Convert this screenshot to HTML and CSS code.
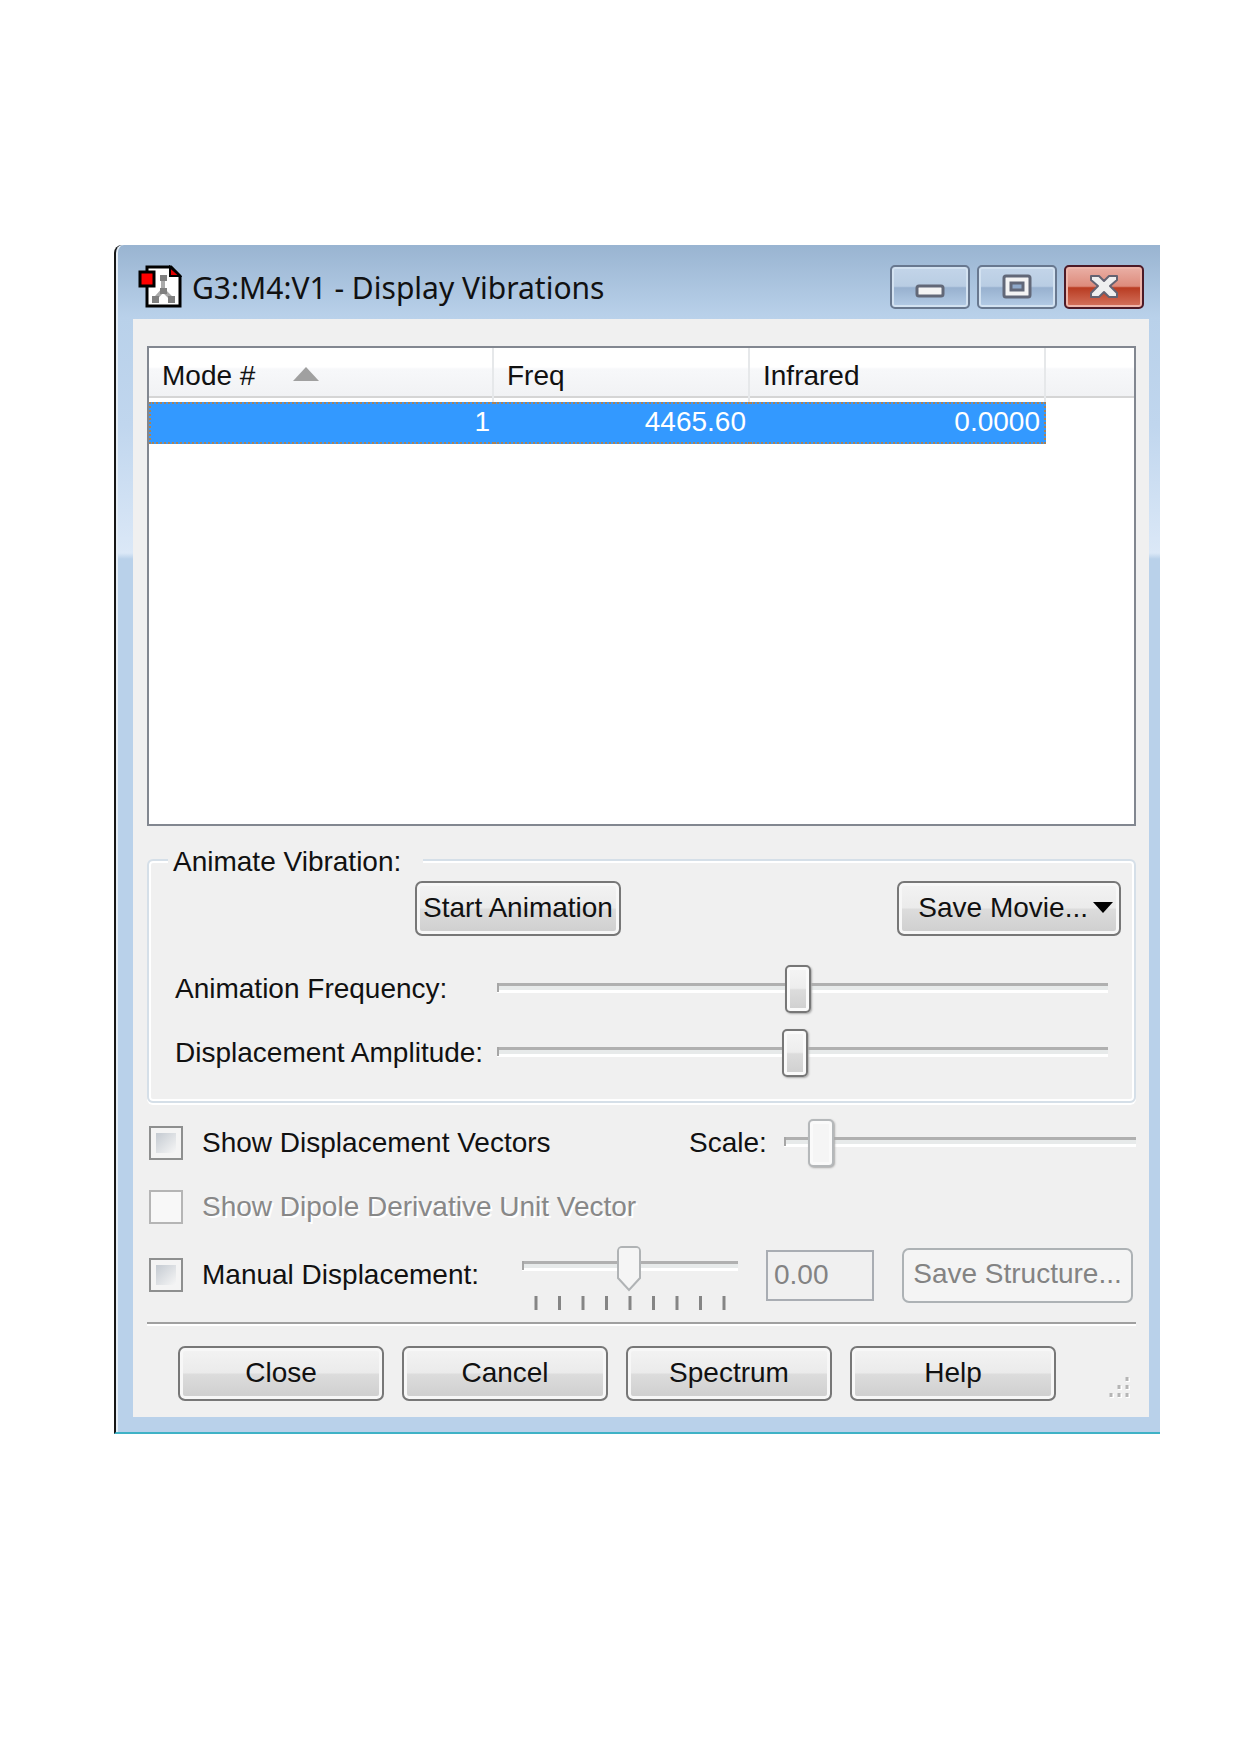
FILE: index.html
```html
<!DOCTYPE html>
<html lang="en">
<head>
<meta charset="utf-8">
<title>Display Vibrations</title>
<link rel="stylesheet" href="styles.css">
</head>
<body>
<main class="window">
  <header class="titlebar">
    <svg class="app-icon" width="44" height="44" viewBox="0 0 44 44" aria-hidden="true">
      <path d="M9 2h24l9 9v30H9z" fill="#fff" stroke="#000" stroke-width="3"/>
      <path d="M32 2v9h10z" fill="#e00000" stroke="#000" stroke-width="2"/>
      <path d="M25 14v14M25 25L17 34M25 25l9 9" stroke="#aaa" stroke-width="4" fill="none"/>
      <path d="M22 10h7v6h-7zM22 23h7v6h-7zM14 31h7v7h-7zM30 31h7v7h-7z" fill="#808080"/>
      <path d="M2 7h14v14H2z" fill="#f00" stroke="#000" stroke-width="3"/>
    </svg>
    <h1 class="title">G3:M4:V1 - Display Vibrations</h1>
    <div class="caption-buttons">
      <button class="caption" type="button" aria-label="Minimize">
        <svg width="30" height="26" viewBox="0 0 30 26"><rect x="2" y="12" width="26" height="10" rx="2" fill="#f4f4f4" stroke="#626878" stroke-width="3"/></svg>
      </button>
      <button class="caption" type="button" aria-label="Maximize">
        <svg width="30" height="26" viewBox="0 0 30 26"><rect x="2" y="2" width="26" height="21" rx="2" fill="#f4f4f4" stroke="#626878" stroke-width="3"/><rect x="9" y="9" width="12" height="7" fill="#8fa9ca" stroke="#626878" stroke-width="3"/></svg>
      </button>
      <button class="caption caption-close" type="button" aria-label="Close window">
        <svg width="30" height="26" viewBox="0 0 30 26"><path d="M2 2h8l5 5 5-5h8v4l-7 6 7 7v4h-8l-5-5-5 5H2v-4l7-7-7-6z" fill="#efefef" stroke="#646372" stroke-width="2" stroke-linejoin="round"/></svg>
      </button>
    </div>
  </header>
  <form class="client">
    <div class="list">
      <table class="modes">
        <colgroup><col class="col-mode"><col class="col-freq"><col class="col-ir"><col></colgroup>
        <thead>
          <tr>
            <th>Mode # <svg class="sort" width="26" height="14" viewBox="0 0 26 14" aria-hidden="true"><path d="M13 0l13 14H0z" fill="#a0a0a0"/></svg></th>
            <th>Freq</th><th>Infrared</th><th></th>
          </tr>
        </thead>
        <tbody>
          <tr><td>1</td><td>4465.60</td><td>0.0000</td></tr>
        </tbody>
      </table>
    </div>

    <fieldset class="group">
      <legend>Animate Vibration:</legend>
      <div class="group-actions">
        <button class="btn" type="button">Start Animation</button>
        <button class="btn btn-menu" type="button">Save Movie...<svg width="20" height="11" viewBox="0 0 20 11" aria-hidden="true"><path d="M0 0h20L10 11z"/></svg></button>
      </div>
      <div class="slider-row">
        <label for="frequency">Animation Frequency:</label>
        <input class="slider" id="frequency" type="range" min="0" max="1000" value="492">
      </div>
      <div class="slider-row">
        <label for="amplitude">Displacement Amplitude:</label>
        <input class="slider" id="amplitude" type="range" min="0" max="1000" value="487">
      </div>
    </fieldset>

    <div class="option">
      <input class="check" id="vectors" type="checkbox">
      <label for="vectors">Show Displacement Vectors</label>
      <div class="scale">
        <label for="scale">Scale:</label>
        <input class="slider" id="scale" type="range" min="0" max="1000" value="74" disabled>
      </div>
    </div>
    <div class="option">
      <input class="check" id="dipole" type="checkbox" disabled>
      <label class="dim" for="dipole">Show Dipole Derivative Unit Vector</label>
    </div>
    <div class="option option-manual">
      <input class="check" id="manual" type="checkbox">
      <label for="manual">Manual Displacement:</label>
      <div class="manual">
        <div class="ticked">
          <input class="slider pointed" type="range" min="0" max="1000" value="495" aria-label="Manual displacement" disabled>
          <svg width="192" height="14" viewBox="0 0 192 14" aria-hidden="true"><path d="M2 0v14M25.500 0v14M49 0v14M72.500 0v14M96 0v14M119.500 0v14M143 0v14M166.500 0v14M190 0v14" stroke="#858585" stroke-width="3"/></svg>
        </div>
        <input class="value" type="text" value="0.00" aria-label="Displacement value" disabled>
        <button class="btn btn-structure" type="button" disabled>Save Structure...</button>
      </div>
    </div>

    <hr class="rule">
    <footer class="footer">
      <button class="btn" type="button">Close</button>
      <button class="btn" type="button">Cancel</button>
      <button class="btn" type="button">Spectrum</button>
      <button class="btn" type="button">Help</button>
      <svg class="grip" width="22" height="24" viewBox="0 0 22 24" aria-hidden="true">
        <path d="M20 5v-4M12 13v-4M20 13v-4M4 21v-4M12 21v-4M20 21v-4" stroke="#fff" stroke-width="4"/>
        <path d="M19 4v-4M11 12v-4M19 12v-4M3 20v-4M11 20v-4M19 20v-4" stroke="#b5b5b5" stroke-width="3"/>
      </svg>
    </footer>
  </form>
</main>
</body>
</html>
```
FILE: styles.css
```css
* { box-sizing: border-box; }

body {
  margin: 0;
  padding: 245px 80px 320px 114px;
  background: #fff;
  color: #111;
  font: 28px/32px "Liberation Sans", Arial, sans-serif;
}

button, input { font: inherit; color: inherit; margin: 0; }

.window {
  padding: 0 11px 15px 17px;
  border-left: 2px solid #161616;
  border-bottom: 2px solid #3fb2c6;
  border-top-left-radius: 8px;
  background: linear-gradient(#99b4d1, #b9d1ea 72px, #c0d6ee 180px, #dbe8f7 308px, #b9d1ea 314px);
  box-shadow: inset 2px 0 #e4edf6;
}

.titlebar {
  display: flex;
  align-items: center;
  height: 74px;
  padding: 14px 5px 0;
}

.titlebar .app-icon { margin-bottom: 4px; }

.title {
  flex: 1;
  margin: 0 0 2px 10px;
  font: 30px/36px "Noto Sans", sans-serif;
  white-space: nowrap;
}

.caption-buttons { display: flex; gap: 7px; margin-bottom: 4px; }

.caption {
  display: flex;
  align-items: center;
  justify-content: center;
  width: 80px;
  height: 44px;
  padding: 0;
  border: 2px solid #68788f;
  border-radius: 5px;
  background: linear-gradient(#c3d5e9, #b9cde3 48%, #98b1cf 52%, #b4cce6);
  box-shadow: inset 0 0 0 2px #d3e2f1;
}

.caption-close {
  border-color: #4c1a27;
  background: linear-gradient(#eab0a6, #dd8b7c 48%, #b93c22 52%, #d4745f);
  box-shadow: inset 0 0 0 2px #eeb5aa;
}

.client {
  padding: 27px 13px 16px 14px;
  background: #f0f0f0;
}

.list {
  min-height: 480px;
  border: 2px solid #828790;
  background: #fff;
}

.modes {
  width: 100%;
  table-layout: fixed;
  border-collapse: separate;
  border-spacing: 0;
}

.col-mode { width: 345px; }
.col-freq { width: 256px; }
.col-ir { width: 296px; }

.modes th {
  height: 54px;
  padding: 1px 13px 0;
  border-right: 2px solid #e6e8ea;
  background: linear-gradient(#fff 19px, #f7f8fa 21px, #f1f2f4 48px, #d5d5d5 48px, #d5d5d5 50px, #fff 50px);
  font-weight: normal;
  text-align: left;
}

.modes th:last-child { border-right: 0; }
.sort { margin-left: 30px; vertical-align: 4px; }

.modes td {
  height: 42px;
  padding: 0 4px 2px;
  border: dotted #a98258;
  border-width: 2px 0;
  background: #39f;
  color: #fff;
  text-align: right;
}

.modes td:first-child { border-left-width: 2px; }
.modes td:last-child { border-right-width: 2px; }

.group {
  min-width: 0;
  margin: 16px 0 8px;
  padding: 3px 13px 16px 26px;
  border: 2px solid #d5dfe8;
  border-radius: 6px;
  box-shadow: inset 0 0 0 2px #fff, 0 2px #fff;
}

.group legend {
  margin-left: -7px;
  padding: 4px 22px 0 5px;
  background: #f0f0f0;
}

.group-actions {
  display: flex;
  justify-content: space-between;
  margin-bottom: 21px;
  padding-left: 240px;
}

.btn {
  width: 206px;
  height: 55px;
  padding: 0 0 2px;
  border: 2px solid #777;
  border-radius: 7px;
  background: linear-gradient(#f3f3f3, #ebebeb 48%, #dcdcdc 52%, #cecece);
  box-shadow: inset 0 0 0 3px #f7f7f7;
  white-space: nowrap;
}

.btn-menu {
  display: flex;
  align-items: center;
  justify-content: flex-end;
  gap: 5px;
  width: 224px;
  padding-right: 6px;
}

.btn:disabled {
  border-color: #adb2b5;
  background: #f4f4f4;
  box-shadow: none;
  color: #838383;
}

.slider-row {
  display: grid;
  grid-template-columns: 322px 1fr;
  align-items: center;
  height: 64px;
  padding-right: 13px;
}

.slider {
  appearance: none;
  width: 100%;
  height: 48px;
  background:
    linear-gradient(#a6a6a6, #a6a6a6) 0 18px / 2px 9px no-repeat,
    linear-gradient(#b0b0b0 3px, #e7eaea 3px, #e7eaea 7px, #fff 7px) 0 18px / 100% 10px no-repeat;
}

.slider::-webkit-slider-thumb {
  appearance: none;
  width: 26px;
  height: 48px;
  border: 2px solid #777;
  border-radius: 5px;
  background: linear-gradient(#f5f5f5, #ededed 48%, #dcdcdc 52%, #cfcfcf);
  box-shadow: inset 0 0 0 3px #fafafa, 1px 1px 2px #aaa;
}

.slider:disabled::-webkit-slider-thumb {
  border-color: #b5b8ba;
  background: #f5f5f5;
}

.option {
  display: grid;
  grid-template-columns: 34px auto 1fr;
  align-items: center;
  height: 64px;
  padding-left: 2px;
}

.option > label { padding-left: 19px; white-space: nowrap; }
.option-manual { height: 72px; }

.check {
  appearance: none;
  width: 34px;
  height: 34px;
  border: 2px solid #8e8f8f;
  background: linear-gradient(135deg, #c4cad1, #f6f6f6) content-box, #f4f4f4;
  padding: 5px;
}

.check:disabled { border-color: #b5b5b5; background: #f8f8f8; }
.dim { color: #888; text-shadow: 2px 2px #fff; }

.scale {
  display: grid;
  grid-template-columns: 95px 352px;
  align-items: center;
  justify-content: end;
}

.manual {
  display: grid;
  grid-template-columns: 216px 108px 231px;
  align-items: center;
  justify-content: end;
  column-gap: 28px;
  padding-right: 3px;
}

.ticked {
  display: flex;
  flex-direction: column;
  align-items: center;
  gap: 4px;
  padding-top: 6px;
}

.pointed {
  height: 46px;
  background-position: 0 15px, 0 15px;
}

.pointed:disabled::-webkit-slider-thumb {
  width: 24px;
  height: 46px;
  border: 0;
  background: url("data:image/svg+xml,%3Csvg xmlns='http://www.w3.org/2000/svg' width='24' height='46'%3E%3Cpath d='M4 1h16q3 0 3 3v28L12 44 1 32V4q0-3 3-3z' fill='%23f5f5f5' stroke='%23b0b3b5' stroke-width='2'/%3E%3C/svg%3E") no-repeat;
  box-shadow: none;
}

.value {
  width: 100%;
  height: 51px;
  padding: 0 6px;
  border: 2px solid #a9adb3;
  border-radius: 0;
  background: #f0f0f0;
  color: #838383;
}

.btn-structure { width: 100%; }

.rule {
  height: 4px;
  margin: 11px 0 20px;
  border: 0;
  border-top: 2px solid #a0a0a0;
  background: #fff;
}

.footer {
  display: flex;
  align-items: flex-end;
  gap: 18px;
  padding: 0 6px 0 31px;
}

.grip { margin-left: auto; }
```
